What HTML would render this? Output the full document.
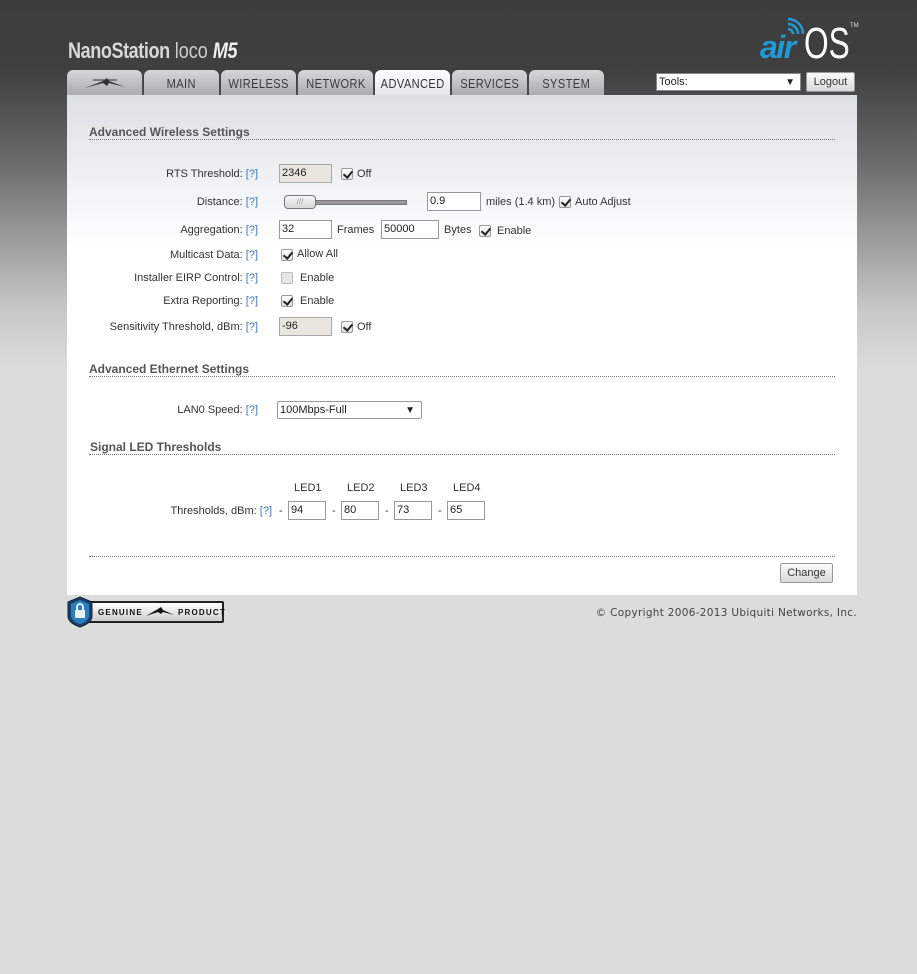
<!DOCTYPE html>
<html><head><meta charset="utf-8">
<style>
*{box-sizing:border-box;margin:0;padding:0}
html,body{width:917px;height:974px;overflow:hidden}
body{font-family:"Liberation Sans",Arial,sans-serif;font-size:11px;color:#333;
background:linear-gradient(#3d3d3d 0px,#3f3f3f 70px,#6a6a6a 160px,#9c9c9c 240px,#c8c8c8 310px,#dcdcdc 370px,#dcdcdc 974px);position:relative}
.a{position:absolute;white-space:nowrap}
.brand{left:68px;top:38px;color:#d8d8d8;font-size:22px;font-weight:bold;letter-spacing:-0.5px;transform:scaleX(.82);transform-origin:left}
.tab{position:absolute;top:70px;height:25px;width:75px;border-radius:6px 6px 0 0;background:linear-gradient(#d6d7d9,#a9abae);color:#3a3a3a;font-size:13px;text-align:center;line-height:27px}
.tab span{display:inline-block;transform:scaleX(.85);letter-spacing:0.5px}
.tab.act{background:linear-gradient(#ffffff,#e4e6ea);color:#333}
.panel{left:67px;top:95px;width:790px;height:500px;background:linear-gradient(#dde0e5 0px,#eef0f3 80px,#fff 150px,#fff)}
.h{font-weight:bold;font-size:12px;color:#555}
.line{height:0;border-top:1px dotted #777}
.lbl{text-align:right;width:200px}
.q{color:#3a78b8}
.in{position:absolute;height:19px;border:1px solid #999;background:#fff;padding:2px 2px;font-size:11px;line-height:13px;color:#222}
.in.d{background:#e8e6df;border-color:#aaa}
.cb{position:absolute;width:12px;height:12px;border:1px solid #999;border-radius:2px;background:linear-gradient(#fff,#e0e0e0)}
.cb.c::after{content:"";position:absolute;left:3px;top:0px;width:4px;height:7px;border:solid #222;border-width:0 2px 2px 0;transform:rotate(40deg)}
.btn{position:absolute;border:1px solid #999;border-radius:2px;background:linear-gradient(#fafafa,#dadada);font-size:11px;text-align:center;color:#333}
</style></head><body>
<div class="a brand">NanoStation<span style="font-weight:normal;font-size:22px;color:#ccc;letter-spacing:0"> loco </span><i style="color:#eee">M5</i></div>

<svg class="a" style="left:758px;top:15px" width="102" height="46" viewBox="0 0 102 46">
<text x="2" y="43" font-family="Liberation Sans" font-style="italic" font-weight="bold" font-size="32" fill="#1f9ad6" letter-spacing="-1.5">air</text>
<path d="M30 14 a5 5 0 0 1 5 5 M30 9 a10 10 0 0 1 10 10 M30 4 a15 15 0 0 1 15 15" stroke="#1f9ad6" stroke-width="2.5" fill="none"/>
<text x="0" y="43" font-family="Liberation Sans" font-size="44" fill="#fff" transform="translate(46,0) scale(.72,1)">OS</text>
<text x="92" y="12" font-family="Liberation Sans" font-size="6" fill="#ddd">TM</text>
</svg>

<div class="tab" style="left:67px"><svg width="44" height="14" viewBox="0 0 44 14" style="margin-top:6px"><path d="M2 12 L20 5 L24 2 L26 5 L42 11 L26 7 L24 10 L20 7 Z" fill="#333"/><path d="M10 4 L34 4" stroke="#333" stroke-width="1"/></svg></div>
<div class="tab" style="left:144px"><span>MAIN</span></div>
<div class="tab" style="left:221px"><span>WIRELESS</span></div>
<div class="tab" style="left:298px"><span>NETWORK</span></div>
<div class="tab act" style="left:375px"><span>ADVANCED</span></div>
<div class="tab" style="left:452px"><span>SERVICES</span></div>
<div class="tab" style="left:529px"><span>SYSTEM</span></div>

<div class="in" style="left:656px;top:73px;width:145px;height:18px;border-color:#888">Tools:<span style="position:absolute;right:5px;top:2px;font-size:10px">▼</span></div>
<div class="btn" style="left:806px;top:72px;width:49px;height:20px;line-height:18px">Logout</div>

<div class="a panel"></div>
<div class="a h" style="left:89px;top:125px">Advanced Wireless Settings</div>
<div class="a line" style="left:89px;top:139px;width:746px"></div>

<div class="a lbl" style="left:58px;top:168px">RTS Threshold: <span class="q">[?]</span></div>
<div class="in d" style="left:279px;top:164px;width:53px">2346</div>
<div class="cb c" style="left:341px;top:168px"></div><div class="a" style="left:357px;top:168px">Off</div>

<div class="a lbl" style="left:58px;top:196px">Distance: <span class="q">[?]</span></div>
<div class="a" style="left:310px;top:200px;width:97px;height:5px;background:#999;border:1px solid #777"></div>
<div class="a" style="left:284px;top:195px;width:32px;height:14px;border:1px solid #777;border-radius:4px;background:linear-gradient(#f5f5f5,#d8d8d8);font-size:8px;color:#999;text-align:center;line-height:12px">///</div>
<div class="in" style="left:427px;top:192px;width:54px">0.9</div>
<div class="a" style="left:486px;top:196px">miles (1.4 km)</div>
<div class="cb c" style="left:559px;top:196px"></div><div class="a" style="left:575px;top:196px">Auto Adjust</div>

<div class="a lbl" style="left:58px;top:224px">Aggregation: <span class="q">[?]</span></div>
<div class="in" style="left:279px;top:220px;width:53px">32</div>
<div class="a" style="left:337px;top:224px">Frames</div>
<div class="in" style="left:381px;top:220px;width:58px">50000</div>
<div class="a" style="left:444px;top:224px">Bytes</div>
<div class="cb c" style="left:479px;top:225px"></div><div class="a" style="left:497px;top:225px">Enable</div>

<div class="a lbl" style="left:58px;top:249px">Multicast Data: <span class="q">[?]</span></div>
<div class="cb c" style="left:281px;top:249px"></div><div class="a" style="left:297px;top:248px">Allow All</div>

<div class="a lbl" style="left:58px;top:272px">Installer EIRP Control: <span class="q">[?]</span></div>
<div class="cb" style="left:281px;top:272px;background:#e6e6e6;border-color:#bbb"></div><div class="a" style="left:300px;top:272px">Enable</div>

<div class="a lbl" style="left:58px;top:295px">Extra Reporting: <span class="q">[?]</span></div>
<div class="cb c" style="left:281px;top:295px"></div><div class="a" style="left:300px;top:295px">Enable</div>

<div class="a lbl" style="left:58px;top:321px">Sensitivity Threshold, dBm: <span class="q">[?]</span></div>
<div class="in d" style="left:279px;top:317px;width:53px">-96</div>
<div class="cb c" style="left:341px;top:321px"></div><div class="a" style="left:357px;top:321px">Off</div>

<div class="a h" style="left:89px;top:362px">Advanced Ethernet Settings</div>
<div class="a line" style="left:89px;top:376px;width:746px"></div>
<div class="a lbl" style="left:58px;top:404px">LAN0 Speed: <span class="q">[?]</span></div>
<div class="in" style="left:277px;top:401px;width:145px;height:18px;border-radius:2px">100Mbps-Full<span style="position:absolute;right:6px;top:2px;font-size:10px">▼</span></div>

<div class="a h" style="left:90px;top:440px">Signal LED Thresholds</div>
<div class="a line" style="left:89px;top:454px;width:746px"></div>
<div class="a" style="left:294px;top:482px">LED1</div>
<div class="a" style="left:347px;top:482px">LED2</div>
<div class="a" style="left:400px;top:482px">LED3</div>
<div class="a" style="left:453px;top:482px">LED4</div>
<div class="a lbl" style="left:72px;top:505px">Thresholds, dBm: <span class="q">[?]</span></div>
<div class="a" style="left:279px;top:505px">-</div><div class="in" style="left:288px;top:501px;width:38px">94</div>
<div class="a" style="left:332px;top:505px">-</div><div class="in" style="left:341px;top:501px;width:38px">80</div>
<div class="a" style="left:385px;top:505px">-</div><div class="in" style="left:394px;top:501px;width:38px">73</div>
<div class="a" style="left:438px;top:505px">-</div><div class="in" style="left:447px;top:501px;width:38px">65</div>

<div class="a line" style="left:89px;top:556px;width:746px"></div>
<div class="btn" style="left:780px;top:563px;width:53px;height:20px;line-height:18px">Change</div>

<svg class="a" style="left:66px;top:596px" width="162" height="32" viewBox="0 0 162 32">
<defs><linearGradient id="g" x1="0" y1="0" x2="0" y2="1"><stop offset="0" stop-color="#fff"/><stop offset="1" stop-color="#ccc"/></linearGradient></defs>
<rect x="14" y="5" width="144" height="22" rx="2" fill="#222"/>
<rect x="16" y="7" width="140" height="18" fill="url(#g)"/>
<path d="M2 6 L14 1 L26 6 L26 20 Q26 27 14 31 Q2 27 2 20 Z" fill="#1a3e66" stroke="#0c2440" stroke-width="1"/>
<path d="M5 8 L14 4 L23 8 L23 19 Q23 25 14 28 Q5 25 5 19 Z" fill="#2b7fc1"/>
<rect x="9" y="14" width="10" height="8" fill="#e8eef5"/><path d="M11 14 V11 a3 3 0 0 1 6 0 V14" stroke="#e8eef5" stroke-width="2" fill="none"/>
<text x="32" y="19" font-family="Liberation Sans" font-weight="bold" font-size="8" fill="#111" letter-spacing="1.2">GENUINE</text>
<path d="M80 20 L92 13 L95 11 L97 14 L108 19 L97 16 L95 18 L92 16 Z" fill="#111"/>
<text x="112" y="19" font-family="Liberation Sans" font-weight="bold" font-size="8" fill="#111" letter-spacing="1.2">PRODUCT</text>
</svg>
<div class="a" style="right:60px;top:607px;font-family:'DejaVu Sans',sans-serif;font-size:10.5px;letter-spacing:0.3px;color:#444">© Copyright 2006-2013 Ubiquiti Networks, Inc.</div>
</body></html>
